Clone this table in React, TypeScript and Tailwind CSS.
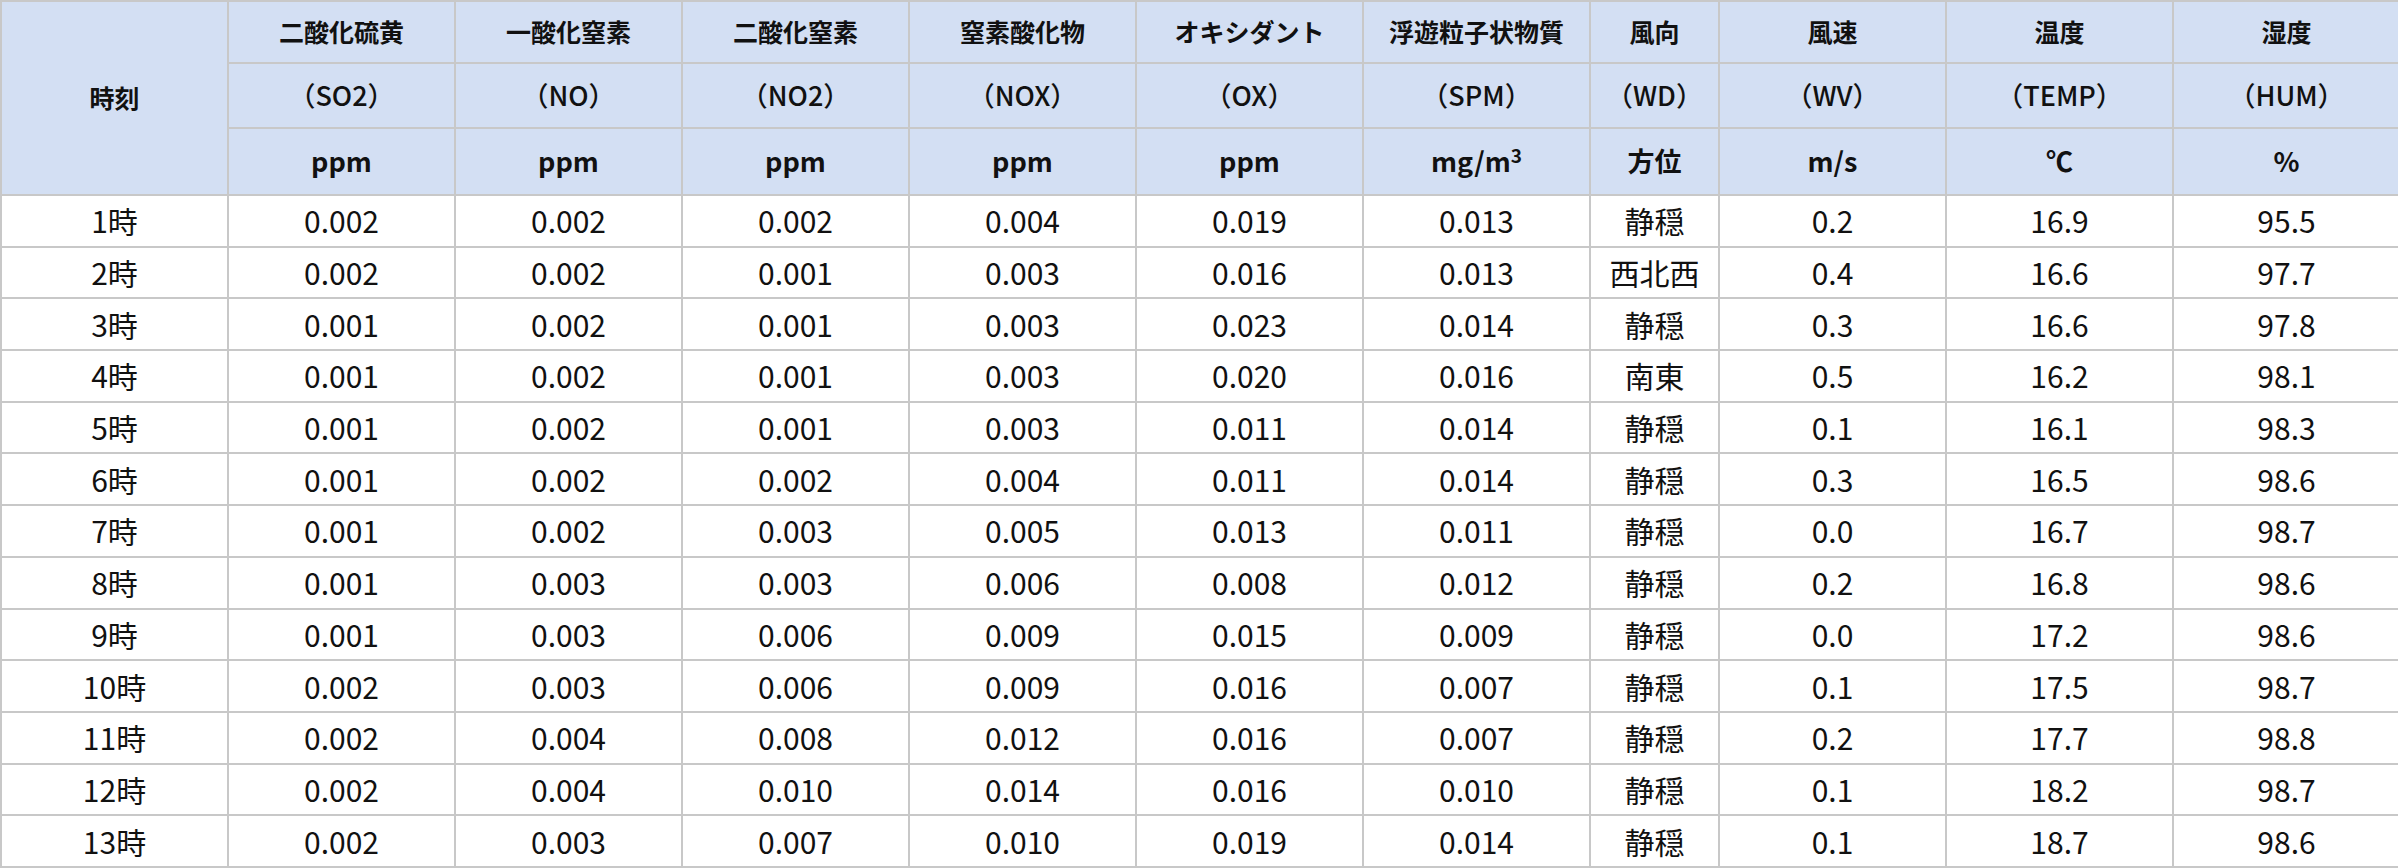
const heads = [
  ["二酸化硫黄", "（SO2）", "ppm"],
  ["一酸化窒素", "（NO）", "ppm"],
  ["二酸化窒素", "（NO2）", "ppm"],
  ["窒素酸化物", "（NOX）", "ppm"],
  ["オキシダント", "（OX）", "ppm"],
  ["浮遊粒子状物質", "（SPM）", "mg/m3"],
  ["風向", "（WD）", "方位"],
  ["風速", "（WV）", "m/s"],
  ["温度", "（TEMP）", "℃"],
  ["湿度", "（HUM）", "%"],
];

const rows = [
  ["1時", "0.002", "0.002", "0.002", "0.004", "0.019", "0.013", "静穏", "0.2", "16.9", "95.5"],
  ["2時", "0.002", "0.002", "0.001", "0.003", "0.016", "0.013", "西北西", "0.4", "16.6", "97.7"],
  ["3時", "0.001", "0.002", "0.001", "0.003", "0.023", "0.014", "静穏", "0.3", "16.6", "97.8"],
  ["4時", "0.001", "0.002", "0.001", "0.003", "0.020", "0.016", "南東", "0.5", "16.2", "98.1"],
  ["5時", "0.001", "0.002", "0.001", "0.003", "0.011", "0.014", "静穏", "0.1", "16.1", "98.3"],
  ["6時", "0.001", "0.002", "0.002", "0.004", "0.011", "0.014", "静穏", "0.3", "16.5", "98.6"],
  ["7時", "0.001", "0.002", "0.003", "0.005", "0.013", "0.011", "静穏", "0.0", "16.7", "98.7"],
  ["8時", "0.001", "0.003", "0.003", "0.006", "0.008", "0.012", "静穏", "0.2", "16.8", "98.6"],
  ["9時", "0.001", "0.003", "0.006", "0.009", "0.015", "0.009", "静穏", "0.0", "17.2", "98.6"],
  ["10時", "0.002", "0.003", "0.006", "0.009", "0.016", "0.007", "静穏", "0.1", "17.5", "98.7"],
  ["11時", "0.002", "0.004", "0.008", "0.012", "0.016", "0.007", "静穏", "0.2", "17.7", "98.8"],
  ["12時", "0.002", "0.004", "0.010", "0.014", "0.016", "0.010", "静穏", "0.1", "18.2", "98.7"],
  ["13時", "0.002", "0.003", "0.007", "0.010", "0.019", "0.014", "静穏", "0.1", "18.7", "98.6"],
];

const cell = "border-2 border-[#c8c8c8] text-center align-middle text-[#111]";
const th = cell + " bg-[#d3dff3] font-bold text-[25px]";
const td = cell + " bg-white text-[30px]";

const App = () => {
  return <div className="w-full bg-white font-['Noto_Sans_CJK_JP','Noto_Sans',sans-serif]">
      <table className="w-full table-fixed border-collapse">
        <colgroup>
          <col className="w-[227px]" />
          {heads.map(([name]) => <col key={name} className={name === "風向" ? "w-[129px]" : "w-[227px]"} />)}
        </colgroup>
        <thead>
          <tr className="h-[62px]">
            <th rowSpan={3} className={th}>時刻</th>
            {heads.map(h => <th key={h[0]} className={th}>{h[0]}</th>)}
          </tr>
          <tr className="h-[65px]">
            {heads.map(h => <th key={h[1]} className={cell + " bg-[#d3dff3] font-medium text-[27px]"}>{h[1]}</th>)}
          </tr>
          <tr className="h-[67px]">
            {heads.map(h => <th key={h[0] + "u"} className={th + " text-[27px]"}>
                {h[2] === "mg/m3" ? <>mg/m<sup className="text-[19px]">3</sup></> : h[2]}
              </th>)}
          </tr>
        </thead>
        <tbody>
          {rows.map(r => <tr key={r[0]} className="h-[51.7px]">
              {r.map((v, i) => <td key={i} className={td}>{v}</td>)}
            </tr>)}
        </tbody>
      </table>
    </div>;
};
export default App;
